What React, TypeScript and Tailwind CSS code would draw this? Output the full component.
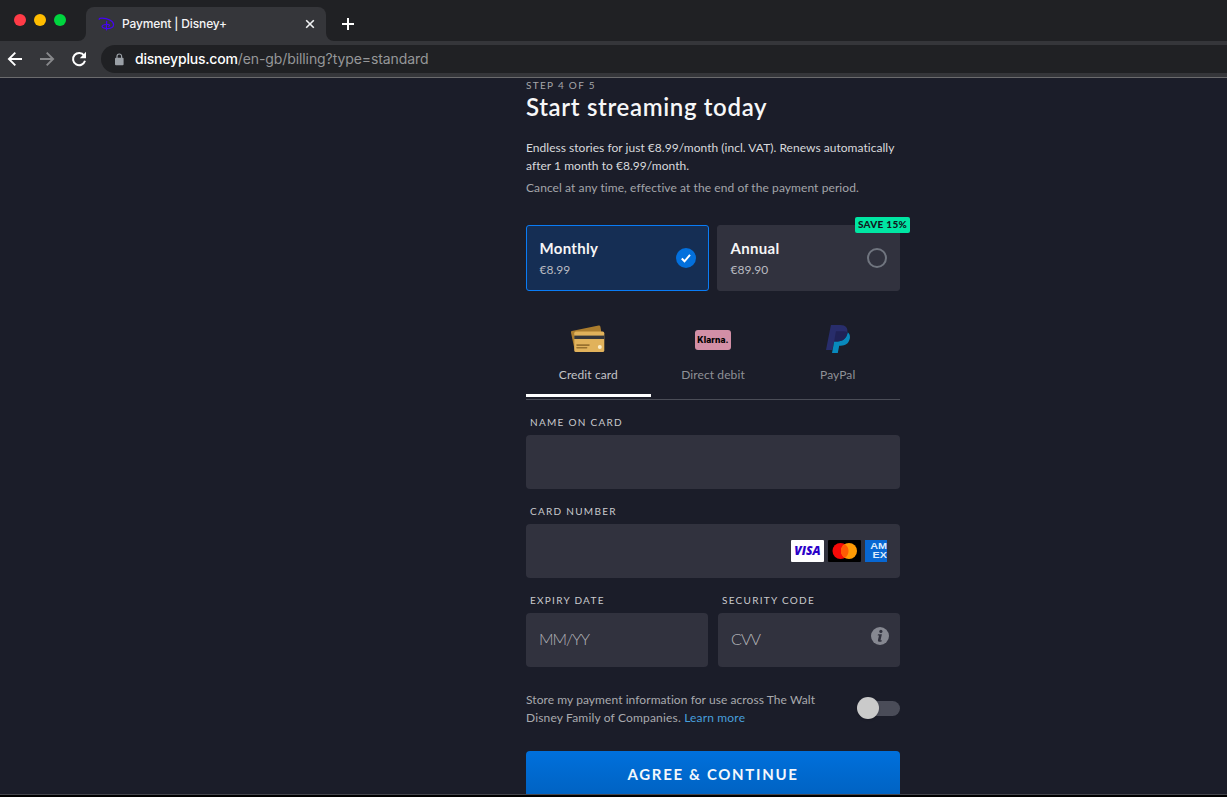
import type { ReactNode } from "react";
import clsx from "clsx";

const PAYMENT_TABS = [
  { id: "card", label: "Credit card", icon: <CreditCardIcon /> },
  { id: "klarna", label: "Direct debit", icon: <KlarnaBadge /> },
  { id: "paypal", label: "PayPal", icon: <PayPalIcon /> },
];

function CreditCardIcon() {
  return (
    <svg width="36" height="30" viewBox="0 0 36 30">
      <path d="M1.8 6.1 28.6.6a1.5 1.5 0 0 1 1.8 1.2L33 16 5 26.5 1 7.7a1.3 1.3 0 0 1 .8-1.6Z" fill="#ab7d2e" />
      <rect x="4.3" y="6.6" width="30" height="20.4" rx="1.6" fill="#e1b25b" />
      <path d="M4.3 10.6h30v3.4h-30z" fill="#33353a" />
      <path d="M7 20.1h12M7 22.7h9.6" stroke="#98712f" strokeWidth="1.6" strokeLinecap="round" />
      <circle cx="29.8" cy="22" r="2" fill="#fbedc8" />
    </svg>
  );
}

function KlarnaBadge() {
  return (
    <span className="flex h-5 w-9 items-center justify-center rounded-[3px] bg-[#d28fa6] pt-px font-['Inter',sans-serif] text-[8.5px] font-extrabold leading-none text-black">
      Klarna.
    </span>
  );
}

function PayPalIcon() {
  return (
    <svg width="24" height="29" viewBox="0 0 24 29">
      <path d="M4.9 0h9.5c5.4 0 7.8 3 6.9 8.1-1.2 6-5 8.3-10 8.3H8.2L6.3 25H0Z" fill="#282d6b" />
      <path d="M21.7 7.3c2 1.4 2.7 3.8 2 6.7-1.1 4.6-4.5 6.7-8.9 6.7h-1.6L11.8 28H6l2.2-11.6h3.1c5.3 0 9-2.4 10.4-9.1Z" fill="#0889bd" />
      <path d="M9.9 6.3h7.4c1.7 0 3.2.3 4.4 1-1.2 6.7-5.1 9.1-10.4 9.1H8.2Z" fill="#202256" />
    </svg>
  );
}

function DisneyIcon() {
  return (
    <svg width="17" height="14" viewBox="0 0 17 14" fill="none" stroke="#4503f5" strokeLinecap="round">
      <path d="M1.2 2.4C1 1.4 2.3 1.1 4 1.1c5.6 0 11.4 2.9 11.6 6.3.2 3.3-3.5 4.4-7 4.2-3-.2-4.8-1.3-4.5-2.4.3-1 2-1.6 3.5-1.7" strokeWidth="1.2" />
      <path d="M8.7 4.3c-.3 2.7-.4 5.6-.2 8.6M8.9 7.4c2.4-.1 3.4.8 1.9 2" strokeWidth="1.2" />
    </svg>
  );
}

function BrowserChrome() {
  return (
    <header className="font-['Inter',sans-serif]">
      <div className="flex h-[41px] bg-[#202124]">
        <div className="flex w-[86px] gap-2 pl-[14px] pt-[14px]">
          <span className="size-3 rounded-full bg-[#ff3b47]" />
          <span className="size-3 rounded-full bg-[#ffbd00]" />
          <span className="size-3 rounded-full bg-[#00d63f]" />
        </div>
        <div className="relative mt-[7px] flex h-[34px] w-[240px] items-center rounded-t-[8px] bg-[#35363a] pl-3 pr-[10px]">
          <svg className="absolute -left-2 bottom-0" width="8" height="8" fill="#35363a">
            <path d="M8 0v8H0a8 8 0 0 0 8-8Z" />
          </svg>
          <svg className="absolute -right-2 bottom-0" width="8" height="8" fill="#35363a">
            <path d="M0 0v8h8a8 8 0 0 1-8-8Z" />
          </svg>
          <DisneyIcon />
          <span className="ml-[7px] flex-1 text-[12px] font-medium leading-4 tracking-[-0.14px] text-[#f4f4f5]">
            Payment | Disney+
          </span>
          <svg width="12" height="12" viewBox="0 0 12 12" stroke="#f1f3f4" strokeWidth="1.6">
            <path d="m2.2 2.2 7.6 7.6m0-7.6-7.6 7.6" />
          </svg>
        </div>
        <svg className="ml-[15px] mt-[17px]" width="14" height="14" viewBox="0 0 14 14" stroke="#fff" strokeWidth="2">
          <path d="M7 1v12M1 7h12" />
        </svg>
      </div>
      <div className="flex h-[37px] items-center border-b border-[#6b6b6d] bg-[#35363a] pl-[7px]">
        <svg width="16" height="16" viewBox="0 0 16 16" fill="none" stroke="#fff" strokeWidth="1.9">
          <path d="M15 8H2M8.3 1.6 1.9 8l6.4 6.4" />
        </svg>
        <svg className="ml-4" width="16" height="16" viewBox="0 0 16 16" fill="none" stroke="#87888b" strokeWidth="1.9">
          <path d="M1 8h13M7.7 1.6 14.1 8l-6.4 6.4" />
        </svg>
        <svg className="ml-4" width="16" height="16" viewBox="0 0 16 16">
          <path d="M13.1 4.5A6.1 6.1 0 1 0 14 9.8" fill="none" stroke="#fff" strokeWidth="2" />
          <path d="M15 .8v6.4H8.8Z" fill="#fff" />
        </svg>
        <div className="ml-[14px] flex h-7 flex-1 items-center rounded-l-full bg-[#202124] pl-[13px]">
          <svg width="10" height="13" viewBox="0 0 10 13">
            <rect x="1" y="4.8" width="8.6" height="7.4" rx="1" fill="#9aa0a6" />
            <path d="M3 5V3.3a2.3 2.3 0 0 1 4.6 0V5" fill="none" stroke="#9aa0a6" strokeWidth="1.2" />
          </svg>
          <span className="ml-[11px] text-[14px] leading-5 tracking-[-0.09px] text-[#969799]">
            <span className="font-medium tracking-[-0.2px] text-white">disneyplus.com</span>/en-gb/billing?type=standard
          </span>
        </div>
      </div>
    </header>
  );
}

function Plan({ name, price, selected }: { name: string; price: string; selected?: boolean }) {
  return (
    <div
      className={clsx(
        "relative flex h-[66px] w-[183px] items-center justify-between rounded-[3px] border pl-[12.5px] pr-3",
        selected ? "border-[#0a7cf5] bg-[#152e54]" : "border-[#31323e] bg-[#31323e]",
      )}
    >
      <div className="pt-0.5">
        <div className="text-[15px] font-bold leading-[21px] tracking-[0.3px] text-[#f5f5f6]">{name}</div>
        <div className="pt-px text-[12px] leading-5 text-[#b9bbc1]">{price}</div>
      </div>
      {selected ? (
        <svg width="20" height="20" viewBox="0 0 20 20">
          <circle cx="10" cy="10" r="10" fill="#0370dd" />
          <path d="m5.8 10.5 2.7 2.8 5.5-6.4" fill="none" stroke="#fff" strokeWidth="2" />
        </svg>
      ) : (
        <span className="size-5 rounded-full border-2 border-[#70757f]" />
      )}
      {!selected && (
        <span className="absolute -right-[11px] -top-[9px] h-4 w-[55px] rounded-[2px] bg-[#00e6a3] text-center text-[10px] font-black leading-[14px] tracking-[0.3px] text-[#11181e]">
          SAVE 15%
        </span>
      )}
    </div>
  );
}

function Field({ label, className, children }: { label: string; className?: string; children?: ReactNode }) {
  return (
    <div className={className}>
      <div className="h-[22px] pl-1 text-[10px] leading-[18px] tracking-[1.28px] text-[#c9cacd]">{label}</div>
      <div className="flex h-[54px] items-center rounded-[4px] bg-[#31323e] px-[13px] text-[16px] text-[#b4b5b9]">
        {children}
      </div>
    </div>
  );
}

function CardBrands() {
  return (
    <div className="ml-auto flex gap-1">
      <span className="flex h-[22px] w-[33px] items-center justify-center rounded-[1px] bg-white font-['Open_Sans',sans-serif] text-[12px] font-extrabold italic leading-none text-[#2b00c8]">
        VISA
      </span>
      <svg width="33" height="22" viewBox="0 0 33 22">
        <rect width="33" height="22" rx="1" fill="#000" />
        <circle cx="12.5" cy="11" r="8" fill="#f50a08" />
        <circle cx="21" cy="11" r="8" fill="#ff9b05" />
        <path d="M16.75 4.2a8 8 0 0 1 0 13.6 8 8 0 0 1 0-13.6Z" fill="#ff5b04" />
      </svg>
      <span className="flex h-[22px] w-[22px] flex-col items-end justify-center overflow-hidden bg-[#0867d2] font-['Liberation_Sans',sans-serif] text-[9px] font-bold leading-[9px] text-[#dcebfb]">
        <span className="block origin-right scale-x-[1.2]">AM</span>
        <span className="block origin-right scale-x-[1.2]">EX</span>
      </span>
    </div>
  );
}

export default function App() {
  return (
    <div className="flex h-[797px] w-[1227px] flex-col overflow-hidden bg-[#1b1d29]">
      <BrowserChrome />
      <main className="ml-[526px] h-[716px] w-[374px] shrink-0 font-['Lato',sans-serif]">
        <div className="h-[15px] text-[10px] leading-[15px] tracking-[1.3px] text-[#a5a6aa]">STEP 4 OF 5</div>
        <h1 className="h-[46px] text-[24px] font-semibold leading-[28px] tracking-[0.65px] text-[#f7f7f8]">Start streaming today</h1>
        <p className="w-[400px] text-[12px] leading-[18px] tracking-[0.03px] text-[#d8d9dc]">
          Endless stories for just €8.99/month (incl. VAT). Renews automatically
          <br />
          after 1 month to €8.99/month.
        </p>
        <p className="mt-1 h-[46px] text-[12px] leading-[18px] tracking-[0.08px] text-[#a3a5aa]">
          Cancel at any time, effective at the end of the payment period.
        </p>

        <div className="flex gap-2">
          <Plan name="Monthly" price="€8.99" selected />
          <Plan name="Annual" price="€89.90" />
        </div>

        <div className="mt-[33px] flex h-[76px] border-b border-[#4b4d57]">
          {PAYMENT_TABS.map(({ id, label, icon }) => (
            <div
              key={id}
              className={clsx(
                "flex h-[73px] flex-1 flex-col items-center border-b-[3px] text-[12px] leading-[18px] tracking-[0.1px]",
                id === "card" ? "border-white text-[#c3c4c7]" : "border-transparent text-[#8f9197]",
              )}
            >
              <span className="flex h-[42px] items-start justify-center">
                <span className="flex h-[31px] items-center">{icon}</span>
              </span>
              {label}
            </div>
          ))}
        </div>

        <Field label="NAME ON CARD" className="mt-[13px]" />
        <Field label="CARD NUMBER" className="mt-[13px]">
          <CardBrands />
        </Field>
        <div className="mt-[13px] flex gap-[10px]">
          <Field label="EXPIRY DATE" className="flex-1">
            <span className="pb-0.5 font-light tracking-[-1px]">MM/YY</span>
          </Field>
          <Field label="SECURITY CODE" className="flex-1">
            <span className="pb-0.5 font-light tracking-[-0.9px]">CVV</span>
            <svg className="-mr-[2px] mb-2 ml-auto" width="18" height="18" viewBox="0 0 18 18">
              <circle cx="9" cy="9" r="9" fill="#868891" />
              <circle cx="9.9" cy="4.4" r="1.6" fill="#31323e" />
              <path d="M7 7.2h3.9l-1.4 6h1.3l-.2 1.2c-2.3.9-4.1.4-3.6-1.6l1-4.3H6.7Z" fill="#31323e" />
            </svg>
          </Field>
        </div>

        <div className="mt-6 flex h-[60px] justify-between">
          <p className="text-[12px] leading-[18px] tracking-[0.07px] text-[#a9aaae]">
            Store my payment information for use across The Walt
            <br />
            <span className="tracking-[0.17px]">
              Disney Family of Companies. <span className="text-[#479fdc]">Learn more</span>
            </span>
          </p>
          <div className="relative mt-[10px] h-[15px] w-9 rounded-full bg-[#4a4c58]">
            <span className="absolute -left-[7px] -top-1 size-[22px] rounded-full bg-[#cacaca] shadow-sm" />
          </div>
        </div>

        <div className="h-[43px] rounded-t-[4px] bg-linear-to-b from-[#0070dc] to-[#0063c3] text-center text-[15px] font-bold leading-[47px] tracking-[1.68px] text-[#f4f8fc]">
          AGREE &amp; CONTINUE
        </div>
      </main>
      <footer className="h-[3px] shrink-0 border-t border-[#45464d] bg-black" />
    </div>
  );
}
